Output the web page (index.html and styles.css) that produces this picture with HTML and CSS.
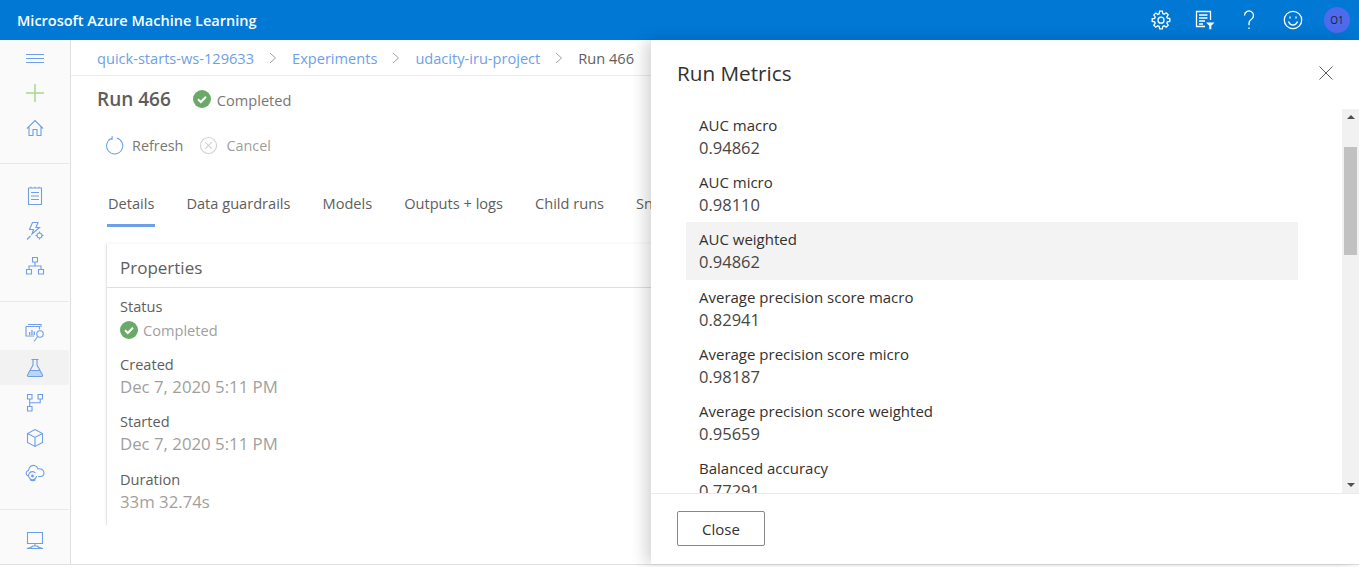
FILE: index.html
```html
<!DOCTYPE html>
<html lang="en">
<head>
    <meta charset="UTF-8">
    <meta name="viewport" content="width=device-width, initial-scale=1.0">
    <link rel="stylesheet" href="styles.css">
    <title>Run 466 - Microsoft Azure Machine Learning</title>
</head>
<body>
    <!-- Top bar -->
    <header class="topbar">
        <span class="brand">Microsoft Azure Machine Learning</span>
        <div class="topbar-icons">
            <svg class="top-icon" viewBox="0 0 20 20"><path d="M8.600 1.200h2.800l.4 2.400 1.400.6 2-1.400 2 2-1.400 2 .6 1.400 2.400.4v2.800l-2.400.4-.6 1.400 1.400 2-2 2-2-1.400-1.400.6-.4 2.400H8.600l-.4-2.400-1.400-.6-2 1.400-2-2 1.400-2-.6-1.400-2.400-.4V8.800l2.400-.4.6-1.400-1.400-2 2-2 2 1.400 1.400-.6z"/><circle cx="10" cy="10.200" r="3"/></svg>
            <svg class="top-icon" viewBox="0 0 20 20"><path d="M15.500 10V1.500H1.500v15H10M4 5h8.500M4 8h8.500M4 11h6M4 14h4"/><path class="solid" d="M11 12.500h8.500l-3.200 3.300v3.500h-2v-3.500z"/></svg>
            <svg class="top-icon" viewBox="0 0 20 20"><path d="M5.500 5.500a4.500 4.500 0 1 1 7 3.700c-1.500 1-2.500 2-2.500 4v2M10 17.500v1.500"/></svg>
            <svg class="top-icon" viewBox="0 0 20 20"><circle cx="10" cy="10" r="8.700"/><path d="M5.500 11.500c1 2.500 2.800 3.500 4.500 3.500s3.500-1 4.500-3.500M7 6.500v2M13 6.500v2"/></svg>
            <span class="avatar">O1</span>
        </div>
    </header>

    <div class="page">
        <!-- Left navigation -->
        <nav class="sidebar">
            <div class="nav-group top">
                <div class="nav-item"><svg class="nav-icon" viewBox="0 0 20 20"><path d="M1 6.500h18M1 10.500h18M1 14.500h18"/></svg></div>
                <div class="nav-item"><svg class="nav-icon plus" viewBox="0 0 20 20"><path d="M10 1v18M1 10h18"/></svg></div>
                <div class="nav-item"><svg class="nav-icon" viewBox="0 0 20 20"><path d="M2 10.500 10 2.500l8 8M4 9v8.500h4v-6h4v6h4V9"/></svg></div>
            </div>
            <div class="nav-group">
                <div class="nav-item"><svg class="nav-icon" viewBox="0 0 20 20"><path d="M3.500 2h13v16.500h-13zM6 6.500h8M6 10h8M6 13.500h8M6 .8V2M10 .8V2M14 .8V2"/></svg></div>
                <div class="nav-item"><svg class="nav-icon" viewBox="0 0 20 20"><path d="M7.500 1.500h5.500L11 6.500h3.500L7 13l1.500-4.500H4.500zM2 18.500l3.500-3.500"/><circle cx="14.500" cy="14.500" r="2.500"/><path d="M14.500 10.500v1.500M14.500 17v1.500M10.500 14.500H12M17 14.500h1.500"/></svg></div>
                <div class="nav-item"><svg class="nav-icon" viewBox="0 0 20 20"><path d="M7.500 1.500h5v4.500h-5zM10 6v4M4 13v-3h12v3M1.500 13.500h5V18h-5zM13.500 13.500h5V18h-5z"/></svg></div>
            </div>
            <div class="nav-group tools">
                <div class="nav-item"><svg class="nav-icon" viewBox="0 0 20 20"><path d="M3 1.500h13v2.500M1 3.500h13.500v3M1 3.500V13h8"/><path class="solid" d="M4 9h1.300v3H4zM6.300 7h1.300v5H6.300zM8.600 8.500h1.300V12H8.600z"/><circle cx="15" cy="11" r="3.200"/><path d="M12.700 13.500 9 18.500"/></svg></div>
                <div class="nav-item active"><svg class="nav-icon" viewBox="0 0 20 20"><path class="tint" d="M5.500 12.500h9l3 5.500h-15z"/><path d="M6.500 1.500h7M8 1.500v5.500L2.500 17a1 1 0 0 0 1 1.500h13a1 1 0 0 0 1-1.500L12 7V1.500M5.500 12.500h9"/></svg></div>
                <div class="nav-item"><svg class="nav-icon" viewBox="0 0 20 20"><path d="M2.500 1.500h4.500v4.500H2.500zM13 1.500h4.500v4.500H13zM2.500 13.500h4.500v4.500H2.500zM4.700 6v7.500M15.200 6v3.700H4.700"/></svg></div>
                <div class="nav-item"><svg class="nav-icon" viewBox="0 0 20 20"><path d="M10 1.500 17.500 5.500v9L10 18.500l-7.500-4v-9zM2.500 5.500 10 9.500l7.500-4M10 9.500v9"/></svg></div>
                <div class="nav-item"><svg class="nav-icon" viewBox="0 0 20 20"><path d="M3 13C.3 12 .5 8 3.500 7.500 4 3.500 7 2 9.500 2.500c2 .5 3 2 3.500 3.500 3-1 6 1 6 4 0 2.500-2 3.500-4 3.500h-2"/><path d="M11.500 13a4 4 0 1 1-1-3M5 16.500c1.500 1.500 4 1.500 5.500 0"/><circle class="solid" cx="7.500" cy="13" r="1.400"/></svg></div>
            </div>
            <div class="nav-group last">
                <div class="nav-item"><svg class="nav-icon" viewBox="0 0 20 20"><path d="M2.500 2.500h15v11h-15zM10 13.500V16M2 18.500c3-.5 5-1.500 6-2.500h4c1 1 3 2 6 2.500z"/></svg></div>
            </div>
        </nav>

        <!-- Main content behind the panel -->
        <main class="content">
            <div class="breadcrumb">
                <a>quick-starts-ws-129633</a>
                <svg class="crumb-sep" viewBox="0 0 8 12"><path d="M1 1l5.500 5L1 11"/></svg>
                <a>Experiments</a>
                <svg class="crumb-sep" viewBox="0 0 8 12"><path d="M1 1l5.500 5L1 11"/></svg>
                <a>udacity-iru-project</a>
                <svg class="crumb-sep" viewBox="0 0 8 12"><path d="M1 1l5.500 5L1 11"/></svg>
                <span class="crumb-current">Run 466</span>
            </div>

            <div class="run-title">
                <h1>Run 466</h1>
                <svg class="check" viewBox="0 0 18 18"><circle cx="9" cy="9" r="9"/><path d="M5 9.300l2.800 2.700L13 6.700"/></svg>
                <span class="run-status">Completed</span>
            </div>

            <div class="toolbar">
                <span class="tool">
                    <svg class="tool-icon refresh" viewBox="0 0 20 20"><path d="M7 2.500a8.500 8.500 0 1 0 5.500-.3M7.500 0v3.500H4"/></svg>
                    Refresh
                </span>
                <span class="tool disabled">
                    <svg class="tool-icon" viewBox="0 0 20 20"><circle cx="10" cy="10" r="8.500"/><path d="M6.500 6.500l7 7M13.500 6.500l-7 7"/></svg>
                    Cancel
                </span>
            </div>

            <div class="tabs">
                <span class="tab selected">Details</span>
                <span class="tab">Data guardrails</span>
                <span class="tab">Models</span>
                <span class="tab">Outputs + logs</span>
                <span class="tab">Child runs</span>
                <span class="tab">Snapshot</span>
            </div>

            <section class="card">
                <h2>Properties</h2>
                <div class="props">
                    <div class="prop">
                        <div class="prop-label">Status</div>
                        <div class="prop-status">
                            <svg class="check" viewBox="0 0 18 18"><circle cx="9" cy="9" r="9"/><path d="M5 9.300l2.800 2.700L13 6.700"/></svg>
                            Completed
                        </div>
                    </div>
                    <div class="prop">
                        <div class="prop-label">Created</div>
                        <div class="prop-value">Dec 7, 2020 5:11 PM</div>
                    </div>
                    <div class="prop">
                        <div class="prop-label">Started</div>
                        <div class="prop-value">Dec 7, 2020 5:11 PM</div>
                    </div>
                    <div class="prop">
                        <div class="prop-label">Duration</div>
                        <div class="prop-value">33m 32.74s</div>
                    </div>
                </div>
            </section>
        </main>
    </div>

    <!-- Run Metrics side panel -->
    <aside class="panel">
        <div class="panel-head">
            <h2>Run Metrics</h2>
            <svg class="panel-close" viewBox="0 0 14 14"><path d="M.5.5l13 13M13.500.5l-13 13"/></svg>
        </div>
        <div class="panel-body">
            <div class="metrics">
                <div class="metric"><div class="metric-name">AUC macro</div><div class="metric-value">0.94862</div></div>
                <div class="metric"><div class="metric-name">AUC micro</div><div class="metric-value">0.98110</div></div>
                <div class="metric hover"><div class="metric-name">AUC weighted</div><div class="metric-value">0.94862</div></div>
                <div class="metric"><div class="metric-name">Average precision score macro</div><div class="metric-value">0.82941</div></div>
                <div class="metric"><div class="metric-name">Average precision score micro</div><div class="metric-value">0.98187</div></div>
                <div class="metric"><div class="metric-name">Average precision score weighted</div><div class="metric-value">0.95659</div></div>
                <div class="metric"><div class="metric-name">Balanced accuracy</div><div class="metric-value">0.77291</div></div>
            </div>
            <div class="scrollbar">
                <span class="arrow-up"></span>
                <div class="scroll-track"><div class="scroll-thumb"></div></div>
                <span class="arrow-down"></span>
            </div>
        </div>
        <div class="panel-foot">
            <button class="close-btn" type="button">Close</button>
        </div>
    </aside>
</body>
</html>
```

FILE: styles.css
```css
/* General */
html, body {
    height: 100%;
}

body {
    margin: 0;
    overflow: hidden;
    font-family: "Open Sans", "Noto Sans", Arial, sans-serif;
    font-size: 14.6px;
    color: #323130;
    background-color: white;
}

svg {
    fill: none;
    stroke: currentColor;
    display: block;
}

svg .solid {
    fill: currentColor;
    stroke: none;
}

/* Top bar */
.topbar {
    height: 40px;
    background-color: #0078d4;
    color: white;
    display: flex;
    align-items: center;
    justify-content: space-between;
    padding: 0 9px 0 17px;
}

.brand {
    font-size: 14.5px;
    font-weight: 600;
}

.topbar-icons {
    display: flex;
    align-items: center;
    gap: 24px;
}

.top-icon {
    width: 20px;
    height: 20px;
    stroke-width: 1.3;
}

.avatar {
    width: 26px;
    height: 26px;
    margin-left: -3px;
    border-radius: 50%;
    background-color: #4f6bed;
    color: #1b1a3a;
    font-size: 10px;
    display: flex;
    align-items: center;
    justify-content: center;
}

/* Page layout */
.page {
    display: flex;
    height: 524px;
    border-bottom: 1px solid #e1dfdd;
}

/* Sidebar */
.sidebar {
    width: 70px;
    flex-shrink: 0;
    background-color: #fafafa;
    border-right: 1px solid #e1dfdd;
}

.nav-group {
    padding: 14px 0 18px;
    border-bottom: 1px solid #e8e8e8;
    margin-right: 1px;
}

.nav-group.top {
    padding-top: 0;
}

.nav-group.tools {
    padding: 13px 0 19px;
}

.nav-group.last {
    padding-top: 12px;
    border-bottom: none;
}

.nav-item {
    height: 35px;
    display: flex;
    align-items: center;
    justify-content: center;
    color: #6e9fe8;
}

.nav-item.active {
    background-color: #f2f2f2;
    border-radius: 0 3px 3px 0;
}

.nav-icon {
    width: 20px;
    height: 20px;
    stroke-width: 1.1;
}

.nav-icon.plus {
    color: #a8d88a;
    stroke-width: 1.5;
}

.nav-icon .tint {
    fill: #bcd4f6;
    stroke: none;
}

/* Content */
.content {
    flex: 1;
    min-width: 0;
    overflow: hidden;
}

.breadcrumb {
    height: 35px;
    display: flex;
    align-items: center;
    gap: 15px;
    padding-left: 26px;
    border-bottom: 1px solid #edebe9;
    color: #6e9fe8;
    white-space: nowrap;
}

.crumb-sep {
    width: 8px;
    height: 12px;
    color: #a19f9d;
    stroke-width: 1;
}

.crumb-current {
    color: #605e5c;
}

.run-title {
    display: flex;
    align-items: center;
    height: 46px;
    padding-left: 26px;
}

.run-title h1 {
    margin: 0 22px 0 0;
    font-size: 19px;
    font-weight: 600;
    color: #605e5c;
}

.check {
    width: 18px;
    height: 18px;
    flex-shrink: 0;
}

.check circle {
    fill: #6aa968;
    stroke: none;
}

.check path {
    stroke: white;
    stroke-width: 2;
}

.run-status {
    margin-left: 6px;
    padding-top: 1px;
    color: #797775;
}

.toolbar {
    display: flex;
    align-items: center;
    gap: 16px;
    height: 46px;
    padding-left: 34px;
    color: #797775;
    font-size: 14.4px;
}

.tool {
    display: flex;
    align-items: center;
    gap: 8px;
}

.tool.disabled {
    color: #a19f9d;
}

.tool-icon {
    width: 19px;
    height: 19px;
    stroke-width: 1.1;
    color: #d2d0ce;
}

.tool-icon.refresh {
    color: #6e9fe8;
}

.tabs {
    display: flex;
    gap: 32px;
    height: 53px;
    padding: 23px 0 0 37px;
    color: #605e5c;
    white-space: nowrap;
}

.tab {
    height: 36px;
    line-height: 24px;
    box-sizing: border-box;
}

.tab.selected {
    margin: 0 -1px;
    padding: 0 1px;
    border-bottom: 3px solid #6e9fe8;
}

.card {
    margin-left: 35px;
    border-left: 1px solid #e8e6e4;
    box-shadow: -1px -1px 3px rgba(0, 0, 0, 0.04);
}

.card h2 {
    margin: 0;
    height: 43px;
    line-height: 47px;
    padding-left: 13px;
    font-size: 17px;
    font-weight: 400;
    color: #605e5c;
    border-bottom: 1px solid #e1dfdd;
}

.props {
    padding: 8px 13px 11px;
}

.prop {
    margin-bottom: 12px;
}

.prop:last-child {
    margin-bottom: 0;
    padding-top: 1px;
}

.prop-label {
    line-height: 20px;
    margin-bottom: 1px;
    color: #605e5c;
}

.prop-value {
    font-size: 16.8px;
    line-height: 24px;
    color: #a19f9d;
}

.prop-status {
    display: flex;
    align-items: center;
    gap: 5px;
    height: 24px;
    margin: 2px 0;
    color: #a19f9d;
}

/* Run Metrics panel */
.panel {
    position: absolute;
    top: 40px;
    left: 651px;
    right: 0;
    height: 524px;
    background-color: white;
    box-shadow: -6px 0 14px rgba(0, 0, 0, 0.16);
    display: flex;
    flex-direction: column;
}

.panel-head {
    height: 68px;
    flex-shrink: 0;
    display: flex;
    align-items: center;
    justify-content: space-between;
    padding: 0 26px 2px 26px;
    box-sizing: border-box;
}

.panel-head h2 {
    margin: 0;
    font-size: 20.7px;
    font-weight: 400;
    color: #323130;
}

.panel-close {
    width: 14px;
    height: 14px;
    color: #605e5c;
}

.panel-body {
    flex: 1;
    min-height: 0;
    display: flex;
    overflow: hidden;
}

.metrics {
    flex: 1;
    padding-left: 35px;
    padding-right: 44px;
    overflow: hidden;
}

.metric {
    height: 57.2px;
    padding-left: 13px;
    box-sizing: border-box;
}

.metric.hover {
    background-color: #f3f3f3;
}

.metric-name {
    font-size: 15px;
    line-height: 22px;
    padding-top: 6px;
    color: #323130;
}

.metric-value {
    font-size: 16.5px;
    line-height: 23px;
    color: #484644;
}

/* Scrollbar */
.scrollbar {
    width: 17px;
    flex-shrink: 0;
    margin-top: 1px;
    background-color: #f1f1f1;
    display: flex;
    flex-direction: column;
    align-items: center;
}

.arrow-up, .arrow-down {
    width: 0;
    height: 0;
    flex-shrink: 0;
    border-left: 4px solid transparent;
    border-right: 4px solid transparent;
    margin: 6px 0;
}

.arrow-up {
    border-bottom: 4px solid #505050;
}

.arrow-down {
    border-top: 4px solid #505050;
}

.scroll-track {
    flex: 1;
    width: 100%;
    padding-top: 22px;
    box-sizing: border-box;
}

.scroll-thumb {
    width: 13px;
    height: 108px;
    margin: 0 auto;
    background-color: #c1c1c1;
}

.panel-foot {
    height: 71px;
    flex-shrink: 0;
    box-sizing: border-box;
    border-top: 1px solid #edebe9;
    padding: 17px 26px;
}

.close-btn {
    width: 88px;
    height: 35px;
    padding: 0;
    background-color: white;
    border: 1px solid #8a8886;
    border-radius: 2px;
    font-family: inherit;
    font-size: 15px;
    color: #323130;
}
```
